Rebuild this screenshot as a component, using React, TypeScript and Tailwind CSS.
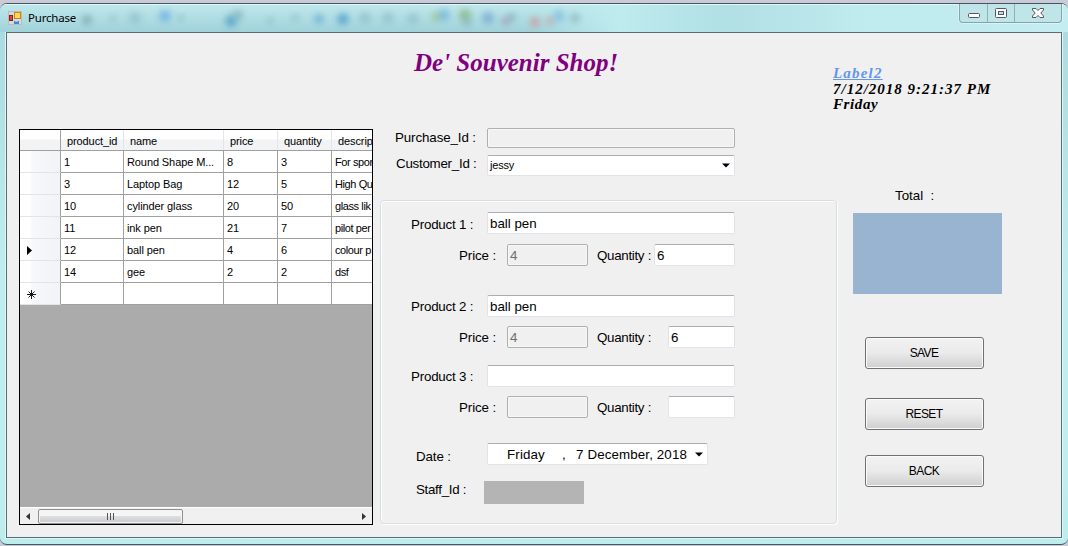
import clsx from "clsx";
import type { ReactNode } from "react";

type Product = {
  id: string;
  name: string;
  price: string;
  quantity: string;
  description: string;
};

const products: Product[] = [
  { id: "1", name: "Round Shape M...", price: "8", quantity: "3", description: "For spor" },
  { id: "3", name: "Laptop Bag", price: "12", quantity: "5", description: "High Qu" },
  { id: "10", name: "cylinder glass", price: "20", quantity: "50", description: "glass lik" },
  { id: "11", name: "ink pen", price: "21", quantity: "7", description: "pilot per" },
  { id: "12", name: "ball pen", price: "4", quantity: "6", description: "colour p" },
  { id: "14", name: "gee", price: "2", quantity: "2", description: "dsf" },
  { id: "", name: "", price: "", quantity: "", description: "" },
];

const columns = ["product_id", "name", "price", "quantity", "descrip"];

// blurred toolbar of the window behind, seen through the glass title bar
const spots = [
  { x: 87, y: 16, r: 5, color: "#6f9ba0" },
  { x: 113, y: 15, r: 4, color: "#96c3c8" },
  { x: 135, y: 14, r: 6, color: "#8bbcc4" },
  { x: 165, y: 12, r: 6, color: "#5fa9e0" },
  { x: 181, y: 14, r: 3, color: "#7fb0b8" },
  { x: 231, y: 17, r: 6, color: "#3f93c0" },
  { x: 238, y: 11, r: 5, color: "#78a9b4" },
  { x: 270, y: 17, r: 4, color: "#8fbfc8" },
  { x: 295, y: 14, r: 4, color: "#8fbfc8" },
  { x: 319, y: 15, r: 5, color: "#5ba5d4" },
  { x: 343, y: 15, r: 6, color: "#3c93c8" },
  { x: 365, y: 14, r: 6, color: "#8cbcc6" },
  { x: 388, y: 14, r: 6, color: "#8cbcc6" },
  { x: 413, y: 15, r: 6, color: "#8cbcc6" },
  { x: 436, y: 13, r: 5, color: "#9fbf82" },
  { x: 444, y: 11, r: 6, color: "#69add8" },
  { x: 465, y: 11, r: 6, color: "#7fae6c" },
  { x: 467, y: 18, r: 5, color: "#8bb3b8" },
  { x: 488, y: 14, r: 6, color: "#6a9dcb" },
  { x: 506, y: 17, r: 5, color: "#a596b4" },
  { x: 512, y: 13, r: 4, color: "#7ea6b4" },
  { x: 535, y: 18, r: 5, color: "#d98a88" },
  { x: 550, y: 17, r: 4, color: "#cf9492" },
  { x: 559, y: 12, r: 6, color: "#79b6de" },
  { x: 575, y: 14, r: 5, color: "#83b0b5" },
];

function FormIcon() {
  return (
    <svg width="14" height="14" viewBox="0 0 14 14" className="ml-2 shrink-0">
      <rect x="0.5" y="0.5" width="13" height="13" fill="#cfdcdd" stroke="#c3b9b4" />
      <rect x="6.5" y="1.5" width="6" height="6" fill="#ffd65a" stroke="#c98510" />
      <rect x="1.5" y="4.5" width="3" height="5" fill="#e0483b" stroke="#8d1c14" />
      <rect x="6" y="10" width="5" height="3" fill="#3f86dd" />
      <rect x="7" y="10" width="3" height="1" fill="#8dbcf2" />
    </svg>
  );
}

function TitleBar() {
  return (
    <div className="relative flex h-7 items-center bg-gradient-to-b from-[#bfe8ec] to-[#a0d2da]">
      <svg width="1068" height="28" className="absolute inset-0">
        <defs>
          <filter id="soft" x="-50%" y="-50%" width="200%" height="200%">
            <feGaussianBlur stdDeviation="3" />
          </filter>
          <linearGradient id="glass" x1="0" x2="1" y1="0" y2="0">
            <stop offset="0" stopColor="#bdebee" stopOpacity="0" />
            <stop offset="0.5" stopColor="#bdebee" stopOpacity="0" />
            <stop offset="0.58" stopColor="#bdebee" />
            <stop offset="0.68" stopColor="#b0dfe4" />
            <stop offset="0.8" stopColor="#bfeaee" />
            <stop offset="1" stopColor="#c3edf0" />
          </linearGradient>
        </defs>
        <rect width="1068" height="28" fill="url(#glass)" />
        {spots.map((spot, index) => (
          <circle
            key={index}
            cx={spot.x}
            cy={spot.y}
            r={spot.r}
            fill={spot.color}
            opacity="0.65"
            filter="url(#soft)"
          />
        ))}
        <rect width="1068" height="1" fill="#e3f7f8" />
      </svg>
      <div className="relative flex items-center">
        <FormIcon />
        <span className="ml-[6px] font-['Noto_Sans','Open_Sans',sans-serif] text-[11.5px] leading-4 tracking-[-0.2px]">
          Purchase
        </span>
      </div>
      <div className="relative mr-[6px] ml-auto flex h-[19px] w-[103px] self-start rounded-b-[4px] border border-t-0 border-[#83a5a9] bg-[#bfe5e8] shadow-[0_0_0_1px_#d8f4f5]">
        <div className="flex w-7 items-center justify-center border-r border-[#8fb2b6]">
          <svg width="12" height="5" className="mt-1">
            <rect x="0.5" y="0.5" width="11" height="4" rx="1" fill="#fff" stroke="#535666" />
          </svg>
        </div>
        <div className="flex w-[27px] items-center justify-center border-r border-[#8fb2b6]">
          <svg width="12" height="10">
            <rect x="0.5" y="0.5" width="11" height="9" rx="1" fill="#fff" stroke="#535666" />
            <rect x="3.5" y="3.5" width="5" height="3" fill="#c2e3e6" stroke="#535666" />
          </svg>
        </div>
        <div className="flex flex-1 items-center justify-center">
          <svg width="12" height="10" viewBox="0 0 12 10">
            <path
              d="M.5.5h3.500l2 2 2-2h3.500v1.500L8.800 5l2.700 3v1.500H8l-2-2-2 2H.5V8l2.700-3L.5 2z"
              fill="#fff"
              stroke="#535666"
            />
          </svg>
        </div>
      </div>
    </div>
  );
}

function ProductGrid() {
  return (
    <div className="mt-px ml-3 flex h-[396px] w-[354px] shrink-0 flex-col overflow-hidden border border-black bg-[#ababab] text-[11px] tracking-[-0.1px]">
      <div className="grid h-[21px] shrink-0 grid-cols-[41px_63px_100px_54px_54px_40px] border-b border-[#a0a0a0] bg-gradient-to-b from-white from-45% to-[#f1f3f5] to-50%">
        <div className="border-r border-[#a0a0a0]" />
        {columns.map((column) => (
          <div
            key={column}
            className="border-r border-[#e3e5e8] pt-[3px] pl-[6px] leading-4 last:border-r-0"
          >
            {column}
          </div>
        ))}
      </div>
      {products.map((product, index) => (
        <div
          key={index}
          className="grid h-[22px] shrink-0 grid-cols-[41px_63px_100px_54px_54px_40px] bg-white leading-[21px]"
        >
          <div className="flex items-center border-r border-b border-r-[#a0a0a0] border-b-[#e2e4e7] bg-gradient-to-r from-white from-25% via-[#f7f8fa] via-30% to-[#f1f3f6] pl-[6px]">
            {product.id === "12" && (
              <svg width="6" height="9" className="mt-px">
                <path d="M1 0v9l5-4.500z" fill="#000" />
              </svg>
            )}
            {index === products.length - 1 && (
              <svg width="9" height="9" viewBox="0 0 9 9" className="mt-px ml-px">
                <path d="M4.500 0v9M0 4.500h9M1.500 1.500l6 6M7.500 1.500l-6 6" stroke="#000" strokeWidth="0.900" />
              </svg>
            )}
          </div>
          <Cell>{product.id}</Cell>
          <Cell>{product.name}</Cell>
          <Cell>{product.price}</Cell>
          <Cell>{product.quantity}</Cell>
          <Cell last>{product.description}</Cell>
        </div>
      ))}
      <div className="mt-auto flex h-[17px] shrink-0 items-center border-t border-white bg-[#f0f0f0]">
        <svg width="18" height="9">
          <path d="M10 1v7L6 4.500z" fill="#333" />
        </svg>
        <div className="flex h-[15px] w-[145px] items-center justify-center gap-px rounded-[2px] border border-[#8f8f8f] bg-gradient-to-b from-[#f5f5f5] from-45% via-[#dddee0] via-50% to-[#c9cacd] shadow-[inset_0_0_0_1px_#f4f4f4]">
          <div className="mr-px h-[7px] w-px bg-[#555]" />
          <div className="mr-px h-[7px] w-px bg-[#555]" />
          <div className="h-[7px] w-px bg-[#555]" />
        </div>
        <svg width="18" height="9" className="ml-auto">
          <path d="M8 1v7l4-3.500z" fill="#333" />
        </svg>
      </div>
    </div>
  );
}

function Cell({ children, last }: { children: ReactNode; last?: boolean }) {
  return (
    <div
      className={clsx(
        "border-b border-[#a0a0a0] pt-px pl-[3px] leading-5 whitespace-nowrap",
        last ? "tracking-[-0.4px]" : "border-r"
      )}
    >
      {children}
    </div>
  );
}

type FieldProps = {
  value?: string;
  disabled?: boolean;
  className: string;
};

function Field({ value, disabled, className }: FieldProps) {
  return (
    <div
      className={clsx(
        "h-[22px] shrink-0 rounded-[2px] border pl-[2px] leading-[21px]",
        disabled
          ? "border-[#afafaf] bg-[#f0f0f0] text-[#6d6d6d] shadow-[inset_0_0_0_1px_#f8f8f8]"
          : "border-[#e2e3ea] border-t-[#abadb3] bg-white",
        className
      )}
    >
      {value}
    </div>
  );
}

type ProductLineProps = {
  label: string;
  name?: string;
  price?: string;
  quantity?: string;
  wide?: boolean;
  className: string;
};

function ProductLine({ label, name, price, quantity, wide, className }: ProductLineProps) {
  return (
    <div className={className}>
      <div className="flex pl-[30px]">
        <div
          className={clsx(
            "w-[76px] leading-[18px] tracking-[-0.2px]",
            wide ? "pt-1" : "pt-[3px]"
          )}
        >
          {label}
        </div>
        <Field value={name} className="w-[248px]" />
      </div>
      <div className={clsx("flex pl-[78px]", wide ? "mt-[10px]" : "mt-[9px]")}>
        <div className="w-12 pt-[3px] leading-[18px] tracking-[-0.1px]">Price :</div>
        <Field value={price} disabled className="w-[81px]" />
        <div className="ml-[9px] pt-[3px] leading-[18px] tracking-[-0.3px] whitespace-nowrap">
          Quantity :
        </div>
        <Field value={quantity} className={clsx("mr-[101px] ml-auto", wide ? "w-[81px]" : "w-[67px]")} />
      </div>
    </div>
  );
}

function DropArrow() {
  return (
    <svg width="8" height="5" className="shrink-0">
      <path d="M0 .5h8L4 4.500z" fill="#000" />
    </svg>
  );
}

function PurchaseForm() {
  return (
    <div className="ml-[7px] w-[457px] shrink-0 text-[13.33px]">
      <div className="flex pl-[15px]">
        <div className="w-[92px] leading-[19px] tracking-[-0.1px] whitespace-nowrap">Purchase_Id :</div>
        <div className="h-5 w-[248px] rounded-[2px] border border-[#afafaf] shadow-[inset_0_0_0_1px_#f8f8f8]" />
      </div>
      <div className="mt-[7px] flex pl-4">
        <div className="w-[91px] leading-[18px] tracking-[-0.25px] whitespace-nowrap">Customer_Id :</div>
        <div className="flex h-[21px] w-[248px] items-center justify-between rounded-[2px] border border-[#e2e3ea] border-t-[#abadb3] bg-white pr-1 pl-[2px] text-[11px] tracking-[-0.2px]">
          jessy
          <DropArrow />
        </div>
      </div>
      <div className="mt-6 h-[324px] rounded-[4px] border border-[#d5dfe5] pt-[11px] shadow-[inset_1px_1px_0_#fff,1px_1px_0_#fff]">
        <ProductLine label="Product 1 :" name="ball pen" price="4" quantity="6" wide className="h-[83px]" />
        <ProductLine label="Product 2 :" name="ball pen" price="4" quantity="6" className="h-[70px]" />
        <ProductLine label="Product 3 :" className="h-[78px]" />
        <div className="flex pl-[35px]">
          <div className="w-[71px] pt-[5px] leading-[18px] tracking-[-0.1px]">Date :</div>
          <div className="flex h-[22px] w-[221px] items-center rounded-[2px] border border-[#e2e3ea] border-t-[#abadb3] bg-white pt-px pr-1 pl-[19px] whitespace-nowrap">
            <span className="w-[55px] tracking-[0.15px]">Friday</span>
            <span className="w-[14px]">,</span>
            <span className="tracking-[0.13px]">7 December, 2018</span>
            <span className="ml-auto flex">
              <DropArrow />
            </span>
          </div>
        </div>
        <div className="mt-[15px] flex pl-[35px]">
          <div className="w-[68px] leading-[18px] tracking-[-0.3px]">Staff_Id :</div>
          <div className="h-[23px] w-[100px] bg-[#b4b4b4]" />
        </div>
      </div>
    </div>
  );
}

function ActionButton({ label, className }: { label: string; className: string }) {
  return (
    <button
      className={clsx(
        "ml-3 block h-8 w-[119px] rounded-[3px] border border-[#707070] bg-gradient-to-b from-[#f2f2f2] via-[#ebebeb] via-48% to-[#cfcfcf] pr-px pb-px text-[12px] tracking-[-0.6px] shadow-[inset_0_0_0_1px_#fbfbfb]",
        className
      )}
    >
      {label}
    </button>
  );
}

export default function App() {
  return (
    <div className="h-[546px] w-[1068px] overflow-hidden bg-[#c9ccd8] pt-[3px] font-['Liberation_Sans',Arial,sans-serif] text-black">
      <div className="h-[542px] overflow-hidden rounded-[7px] border-y border-[#47565c] bg-gradient-to-b from-[#a9d9df] via-[#c0eeee] to-[#bdeeee]">
        <TitleBar />
        <div className="mx-[6px] h-[506px] border border-[#566e72] bg-[#f0f0f0] shadow-[0_0_0_1px_#dff7f7]">
          <div className="flex h-[95px]">
            <h1 className="mt-[13px] ml-[407px] w-[419px] font-['Liberation_Serif',serif] text-[25px] leading-[34px] font-bold text-[#800080] italic">
              De' Souvenir Shop!
            </h1>
            <div className="mt-[33px] font-['Liberation_Serif',serif] text-[15px] leading-[15.500px] font-bold whitespace-nowrap italic">
              <div className="tracking-[1.2px] text-[#6495ed] underline">Label2</div>
              <div className="tracking-[1px]">7/12/2018 9:21:37 PM</div>
              <div className="tracking-[0.6px]">Friday</div>
            </div>
          </div>
          <div className="flex">
            <ProductGrid />
            <PurchaseForm />
            <div className="ml-4 pt-[59px]">
              <div className="ml-[42px] text-[13.33px] leading-[18px] whitespace-pre">Total  :</div>
              <div className="mt-2 h-[81px] w-[149px] bg-[#99b4d1]" />
              <ActionButton label="SAVE" className="mt-[43px]" />
              <ActionButton label="RESET" className="mt-[29px]" />
              <ActionButton label="BACK" className="mt-[25px]" />
            </div>
          </div>
        </div>
      </div>
    </div>
  );
}
